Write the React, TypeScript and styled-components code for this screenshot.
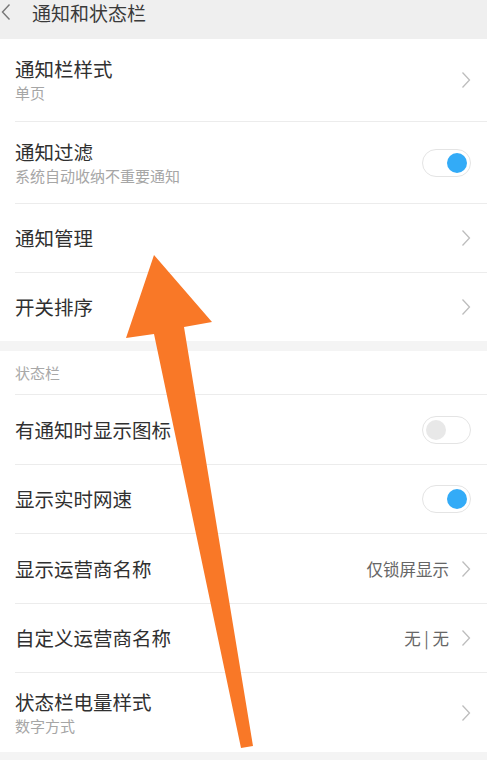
import React from 'react';
import styled, { createGlobalStyle } from 'styled-components';

const GlobalStyle = createGlobalStyle`
  html, body {
    margin: 0;
    padding: 0;
    background: #f4f4f4;
  }
  body {
    font-family: 'Noto Sans CJK SC', 'Noto Sans', sans-serif;
  }
`;

type Item = {
  title: string;
  sub?: string;
  value?: string;
  toggle?: boolean;
  height: number;
};

const notifyItems: Item[] = [
  { title: '通知栏样式', sub: '单页', height: 82 },
  { title: '通知过滤', sub: '系统自动收纳不重要通知', toggle: true, height: 82 },
  { title: '通知管理', height: 69 },
  { title: '开关排序', height: 69 },
];

const statusItems: Item[] = [
  { title: '有通知时显示图标', toggle: false, height: 70 },
  { title: '显示实时网速', toggle: true, height: 69 },
  { title: '显示运营商名称', value: '仅锁屏显示', height: 70 },
  { title: '自定义运营商名称', value: '无 | 无', height: 69 },
  { title: '状态栏电量样式', sub: '数字方式', height: 80 },
];

const Chevron = () => (
  <ChevronIcon width="10" height="18" viewBox="0 0 10 18">
    <path d="M1.5 1.5 L8.5 9 L1.5 16.5" fill="none" stroke="#bdbdbd" strokeWidth="1.3" />
  </ChevronIcon>
);

const SettingRow = ({ item, first }: { item: Item; first: boolean }) => (
  <Row $height={item.height} $first={first}>
    <Texts>
      <RowTitle>{item.title}</RowTitle>
      {item.sub && <RowSub>{item.sub}</RowSub>}
    </Texts>
    {item.value && <Value>{item.value}</Value>}
    {item.toggle === undefined ? (
      <Chevron />
    ) : (
      <Switch $on={item.toggle}>
        <Knob $on={item.toggle} />
      </Switch>
    )}
  </Row>
);

const App = () => {
  return (
    <Page>
      <GlobalStyle />
      <Header>
        <BackIcon width="10" height="18" viewBox="0 0 10 18">
          <path d="M8.5 1.5 L1.5 9 L8.5 16.5" fill="none" stroke="#777" strokeWidth="1.4" />
        </BackIcon>
        <HeaderTitle>通知和状态栏</HeaderTitle>
      </Header>

      <Section>
        {notifyItems.map((item, i) => (
          <SettingRow key={item.title} item={item} first={i === 0} />
        ))}
      </Section>

      <Gap />

      <Section>
        <SectionLabel>状态栏</SectionLabel>
        {statusItems.map((item) => (
          <SettingRow key={item.title} item={item} first={false} />
        ))}
      </Section>

      <Arrow width="487" height="760" viewBox="0 0 487 760">
        <polygon
          points="154,255 212,322 184,327 253,746 241,748 154,334 126,338"
          fill="#f97827"
        />
      </Arrow>
    </Page>
  );
};

export default App;

const Page = styled.div`
  position: relative;
  width: 487px;
  height: 760px;
  overflow: hidden;
  background: #f4f4f4;
`;

const Header = styled.div`
  height: 39px;
  display: flex;
  align-items: flex-start;
  background: #efefef;
`;

const BackIcon = styled.svg`
  margin: 3px 0 0 1px;
  flex-shrink: 0;
`;

const HeaderTitle = styled.div`
  margin-left: 21px;
  font-size: 19px;
  line-height: 25px;
  color: #3a3a3a;
`;

const Section = styled.div`
  background: #fff;
`;

const Gap = styled.div`
  height: 10px;
  background: #f4f4f4;
`;

const SectionLabel = styled.div`
  height: 43px;
  padding-left: 15px;
  display: flex;
  align-items: center;
  font-size: 15px;
  color: #a8a8a8;
`;

const Row = styled.div<{ $height: number; $first: boolean }>`
  box-sizing: border-box;
  height: ${(p) => p.$height}px;
  margin-left: 15px;
  padding-right: 16px;
  display: flex;
  align-items: center;
  border-top: ${(p) => (p.$first ? 'none' : '1px solid #ececec')};
`;

const Texts = styled.div`
  flex: 1;
  display: flex;
  flex-direction: column;
`;

const RowTitle = styled.div`
  font-size: 19.5px;
  line-height: 24px;
  color: #303030;
`;

const RowSub = styled.div`
  margin-top: 2px;
  font-size: 15px;
  line-height: 20px;
  color: #a6a6a6;
`;

const Value = styled.div`
  margin-right: 12px;
  font-size: 16.5px;
  color: #666;
`;

const ChevronIcon = styled.svg`
  flex-shrink: 0;
`;

const Switch = styled.div<{ $on: boolean }>`
  box-sizing: border-box;
  width: 49px;
  height: 28px;
  border-radius: 14px;
  border: 1px solid #e4e4e4;
  background: #fff;
  display: flex;
  align-items: center;
  justify-content: ${(p) => (p.$on ? 'flex-end' : 'flex-start')};
  padding: 0 3px;
`;

const Knob = styled.div<{ $on: boolean }>`
  width: 20px;
  height: 20px;
  border-radius: 50%;
  background: ${(p) => (p.$on ? '#33abf7' : '#e8e8e8')};
`;

const Arrow = styled.svg`
  position: absolute;
  left: 0;
  top: 0;
  pointer-events: none;
`;
